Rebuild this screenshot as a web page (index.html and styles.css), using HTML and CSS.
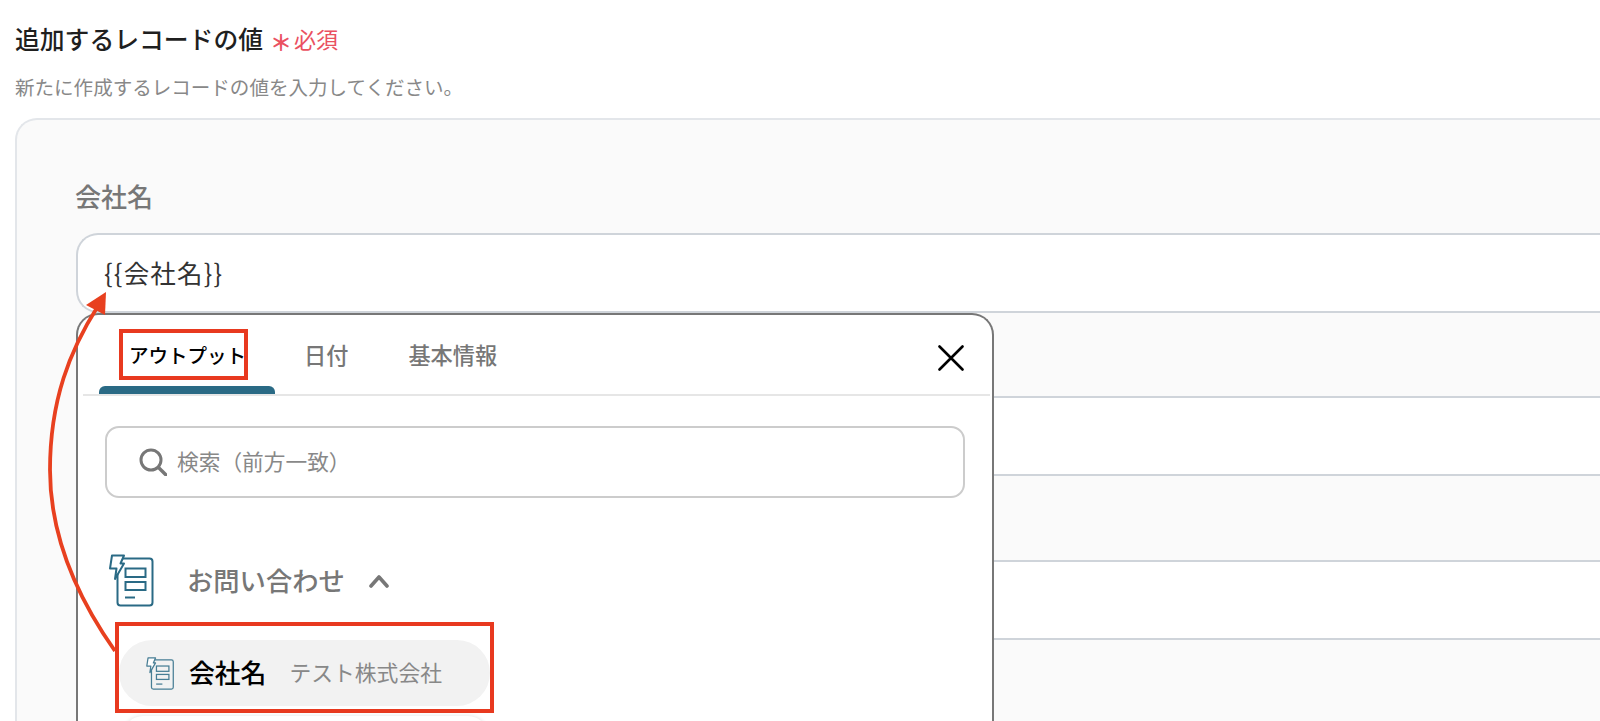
FILE: index.html
```html
<!DOCTYPE html>
<html lang="ja">
<head>
    <title>追加するレコードの値</title>
    <link rel="stylesheet" href="styles.css">
</head>
<body>
    <svg class="icon-defs" width="0" height="0">
        <symbol id="form-icon" viewBox="0 0 46 53">
            <rect x="8.5" y="4.5" width="35" height="47" rx="3" fill="none" stroke="currentColor" stroke-width="2"/>
            <path d="M3 1.5H15L11.5 9.5H15L6 25L7.5 14.5H1Z" fill="#fff" stroke="currentColor" stroke-width="2" stroke-linejoin="round"/>
            <rect x="16.5" y="14.5" width="20" height="8.5" fill="none" stroke="currentColor" stroke-width="2"/>
            <rect x="16.5" y="28" width="20" height="8" fill="none" stroke="currentColor" stroke-width="2"/>
            <path d="M16 43.5H26" fill="none" stroke="currentColor" stroke-width="2"/>
        </symbol>
    </svg>

    <div class="page">
        <div class="title-row">
            <h2>追加するレコードの値</h2>
            <span class="required"><span class="asterisk">＊</span>必須</span>
        </div>
        <p class="hint">新たに作成するレコードの値を入力してください。</p>

        <div class="panel">
            <div class="field field-first">
                <label>会社名</label>
                <div class="value-box">{{会社名}}</div>
            </div>
            <div class="field">
                <div class="value-box"></div>
            </div>
            <div class="field">
                <div class="value-box"></div>
            </div>

            <div class="picker">
                <div class="tabs">
                    <div class="tab tab-active">
                        <span class="tab-label">アウトプット</span>
                        <span class="tab-bar"></span>
                    </div>
                    <div class="tab tab-date">日付</div>
                    <div class="tab tab-info">基本情報</div>
                    <svg class="close" viewBox="0 0 26 26" width="26" height="26">
                        <path d="M1.5 1.5L24.5 24.5M24.5 1.5L1.5 24.5" stroke="#000" stroke-width="2.6" stroke-linecap="round"/>
                    </svg>
                </div>

                <div class="search">
                    <svg viewBox="0 0 28 28" width="28" height="28">
                        <circle cx="12" cy="12" r="10" fill="none" stroke="#777" stroke-width="3"/>
                        <path d="M19.5 19.5L27 27" stroke="#777" stroke-width="3.4" stroke-linecap="round"/>
                    </svg>
                    <span class="search-text">検索（前方一致）</span>
                </div>

                <div class="group">
                    <svg class="group-icon" width="46" height="53"><use href="#form-icon"/></svg>
                    <span class="group-name">お問い合わせ</span>
                    <svg viewBox="0 0 20 14" width="20" height="14">
                        <path d="M2 12L10 3L18 12" fill="none" stroke="#777" stroke-width="3.6" stroke-linecap="round" stroke-linejoin="round"/>
                    </svg>
                </div>

                <div class="item-frame">
                    <div class="item">
                        <svg class="item-icon" width="29" height="33"><use href="#form-icon"/></svg>
                        <span class="item-name">会社名</span>
                        <span class="item-value">テスト株式会社</span>
                    </div>
                </div>
                <div class="item-next"></div>
            </div>
        </div>
    </div>

    <svg class="arrow" viewBox="0 0 200 721" width="200" height="721">
        <path d="M115 651C72 590 50 530 50 470C50 400 70 350 98 306" fill="none" stroke="#e8401f" stroke-width="3.8"/>
        <path d="M106 292L86 305L105 315Z" fill="#e8401f"/>
    </svg>
</body>
</html>
```

FILE: styles.css
```css
html, body {
    margin: 0;
    height: 721px;
    overflow: hidden;
    background-color: #fff;
}
body {
    font-family: "Noto Sans CJK JP", "Noto Sans", sans-serif;
    position: relative;
}
.icon-defs {
    position: absolute;
}
.page {
    padding: 23px 0 0 15px;
}
.title-row {
    display: flex;
    align-items: center;
    height: 30px;
}
h2 {
    margin: 0;
    font-size: 24.8px;
    line-height: 30px;
    font-weight: 500;
    color: #1f1f1f;
}
.required {
    display: flex;
    align-items: center;
    margin-left: 7px;
    font-size: 22px;
    line-height: 30px;
    color: #ea5161;
}
.asterisk {
    margin-right: 2px;
    padding-top: 5px;
    font-weight: 700;
}
.hint {
    margin: 22px 0 0;
    font-size: 19.55px;
    line-height: 24px;
    color: #888;
}
.panel {
    position: relative;
    margin-top: 19px;
    height: 603px;
    box-sizing: border-box;
    padding-left: 59px;
    background-color: #fafafa;
    border-top: 2px solid #e3e6ea;
    border-left: 2px solid #e3e6ea;
    border-top-left-radius: 22px;
}
.field {
    height: 164px;
    box-sizing: border-box;
    padding-top: 82px;
}
.field-first {
    height: 194px;
    padding-top: 0;
}
.field label {
    display: block;
    height: 113px;
    box-sizing: border-box;
    padding-top: 58px;
    margin-left: -1px;
    font-size: 26px;
    line-height: 36px;
    font-weight: 500;
    color: #777;
}
.value-box {
    height: 80px;
    box-sizing: border-box;
    padding-left: 26px;
    background-color: #fff;
    border: 2px solid #cfd4da;
    border-right: none;
    border-radius: 22px 0 0 22px;
    font-size: 25.5px;
    letter-spacing: 1.2px;
    line-height: 73px;
    color: #333;
}
.picker {
    position: absolute;
    left: 59px;
    top: 193px;
    bottom: 0;
    width: 918px;
    box-sizing: border-box;
    overflow: hidden;
    background-color: #fff;
    border: 2px solid #777;
    border-bottom: none;
    border-radius: 22px 22px 0 0;
}
.tabs {
    display: flex;
    align-items: flex-start;
    height: 79px;
    margin: 0 2px 0 5px;
    padding-left: 16px;
    border-bottom: 2px solid #e6e6e6;
}
.tab {
    font-size: 22.2px;
    line-height: 30px;
    font-weight: 500;
    color: #777;
    padding-top: 24px;
}
.tab-active {
    display: flex;
    flex-direction: column;
    width: 176px;
    height: 79px;
    box-sizing: border-box;
    padding: 14px 0 0 20px;
}
.tab-label {
    width: 129px;
    height: 51px;
    box-sizing: border-box;
    border: 4px solid #e8391f;
    padding-left: 6px;
    font-size: 19.5px;
    line-height: 43px;
    color: #000;
    white-space: nowrap;
}
.tab-bar {
    display: block;
    height: 8px;
    margin: 6px 0 0 -20px;
    background-color: #2a6a85;
    border-radius: 6px 6px 0 0;
}
.tab-date {
    margin-left: 29px;
}
.tab-info {
    margin-left: 60px;
}
.close {
    margin: 30px 26px 0 auto;
}
.search {
    display: flex;
    align-items: center;
    gap: 10px;
    height: 72px;
    box-sizing: border-box;
    margin: 30px 27px 0;
    padding-left: 32px;
    border: 2px solid #ccc;
    border-radius: 14px;
    font-size: 21.7px;
    color: #888;
}
.search-text {
    padding-bottom: 3px;
}
.group {
    display: flex;
    align-items: center;
    height: 53px;
    margin-top: 56px;
    padding-left: 31px;
}
.group-icon {
    color: #2a6a85;
}
.group-name {
    margin: 0 24px 0 32px;
    padding-bottom: 2px;
    font-size: 26.3px;
    font-weight: 500;
    color: #777;
}
.item-frame {
    margin: 15px 0 0 37px;
    width: 379px;
    box-sizing: border-box;
    padding: 14px 0 3px;
    border: 4px solid #e8391f;
}
.item {
    display: flex;
    align-items: center;
    height: 66px;
    padding-left: 27px;
    background-color: #f2f2f2;
    border-radius: 33px;
}
.item-icon {
    color: #2a6a85;
    opacity: 0.85;
}
.item-name {
    margin: 0 23px 0 14px;
    padding-bottom: 4px;
    font-size: 25.8px;
    font-weight: 500;
    color: #000;
}
.item-value {
    padding-bottom: 4px;
    font-size: 21.8px;
    color: #888;
}
.item-next {
    margin: 3px 0 0 45px;
    width: 365px;
    height: 40px;
    border-radius: 30px;
    box-shadow: 0 0 4px rgba(0, 0, 0, 0.12);
}
.arrow {
    position: absolute;
    left: 0;
    top: 0;
}
```
